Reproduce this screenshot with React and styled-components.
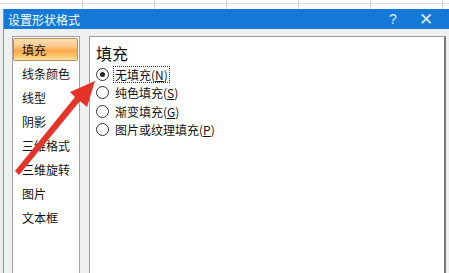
import React from 'react';
import styled, { createGlobalStyle } from 'styled-components';

const GlobalStyle = createGlobalStyle`
  html, body {
    margin: 0;
    padding: 0;
    width: 449px;
    height: 273px;
    overflow: hidden;
    background: #ffffff;
  }
  body {
    font-family: "Noto Sans CJK SC", "Microsoft YaHei", sans-serif;
  }
`;

const Screen = styled.div`
  position: relative;
  width: 449px;
  height: 273px;
  display: flex;
  flex-direction: column;
  overflow: hidden;
`;

const SheetStrip = styled.div`
  height: 9px;
  flex-shrink: 0;
  background-color: #ffffff;
  background-image:
    linear-gradient(to bottom, transparent 3px, #dadada 3px, #dadada 4px, transparent 4px),
    repeating-linear-gradient(to right, transparent 0, transparent 71px, #d4d4d4 71px, #d4d4d4 72px);
  background-position: 0 0, 11px 0;
`;

const Frame = styled.div`
  flex: 1;
  display: flex;
  min-height: 0;
`;

const SheetEdge = styled.div`
  width: 3px;
  flex-shrink: 0;
  background: #e9edf2;
  border-right: 1px solid #5b9bd5;
`;

const Dialog = styled.div`
  flex: 1;
  display: flex;
  flex-direction: column;
  background: #f0f0f0;
  min-width: 0;
`;

const TitleBar = styled.div`
  height: 20px;
  flex-shrink: 0;
  background: #1479d6;
  color: #ffffff;
  display: flex;
  align-items: center;
  padding-left: 4px;
  font-size: 12px;
`;

const Title = styled.span`
  flex: 1;
`;

const TitleButton = styled.span`
  width: ${p => p.$w}px;
  text-align: center;
  font-family: "Liberation Sans", Arial, sans-serif;
  font-size: ${p => p.$size}px;
  font-weight: 300;
  color: #dbe9f7;
`;

const Body = styled.div`
  flex: 1;
  display: flex;
  padding: 7px 3px 0 8px;
  gap: 9px;
  min-height: 0;
`;

const NavList = styled.div`
  width: 65px;
  background: #ffffff;
  border: 1px solid #a0a0a0;
  border-bottom: none;
  padding: 1px 1px 0 0;
  display: flex;
  flex-direction: column;
`;

const NavItem = styled.div`
  height: 23px;
  margin-bottom: 1px;
  display: flex;
  align-items: center;
  padding-left: 9px;
  font-size: 12px;
  color: #111111;
  box-sizing: border-box;
  ${p =>
    p.$active &&
    `
    background: linear-gradient(to bottom, #fde0b4 0%, #fbc98a 35%, #f7a84a 55%, #fcc469 80%, #fde4a4 100%);
    border: 1px solid #b58d5e;
    border-radius: 2px;
    padding-left: 8px;
  `}
`;

const Panel = styled.div`
  flex: 1;
  background: #ffffff;
  border: 1px solid #a0a0a0;
  border-right: 2px solid #7a7a7a;
  border-bottom: none;
  padding: 3px 0 0 6px;
  display: flex;
  flex-direction: column;
`;

const Heading = styled.div`
  font-size: 16px;
  color: #111111;
  height: 25px;
  display: flex;
  align-items: center;
`;

const OptionRow = styled.label`
  display: flex;
  align-items: center;
  height: 18.5px;
  font-size: 12px;
  color: #111111;
  gap: 5px;
`;

const Radio = styled.span`
  width: 11px;
  height: 11px;
  border-radius: 50%;
  border: 1px solid #333333;
  background: #ffffff;
  display: flex;
  align-items: center;
  justify-content: center;
  flex-shrink: 0;
  &::after {
    content: '';
    width: 5px;
    height: 5px;
    border-radius: 50%;
    background: ${p => (p.$checked ? '#222222' : 'transparent')};
  }
`;

const OptionText = styled.span`
  padding: 0 1px;
  outline: ${p => (p.$focus ? '1px dotted #333333' : 'none')};
  line-height: 15px;
`;

const Key = styled.span`
  text-decoration: underline;
`;

const ArrowLayer = styled.svg`
  position: absolute;
  left: 0;
  top: 0;
  pointer-events: none;
`;

const navItems = ['填充', '线条颜色', '线型', '阴影', '三维格式', '三维旋转', '图片', '文本框'];

const options = [
  { label: '无填充', key: 'N', checked: true },
  { label: '纯色填充', key: 'S' },
  { label: '渐变填充', key: 'G' },
  { label: '图片或纹理填充', key: 'P' },
];

export default function App() {
  return (
    <>
      <GlobalStyle />
      <Screen>
        <SheetStrip />
        <Frame>
          <SheetEdge />
          <Dialog>
            <TitleBar>
              <Title>设置形状格式</Title>
              <TitleButton $w={20} $size={14}>?</TitleButton>
              <TitleButton $w={46} $size={17}>✕</TitleButton>
            </TitleBar>
            <Body>
              <NavList>
                {navItems.map((item, i) => (
                  <NavItem key={item} $active={i === 0}>
                    {item}
                  </NavItem>
                ))}
              </NavList>
              <Panel>
                <Heading>填充</Heading>
                {options.map(o => (
                  <OptionRow key={o.key}>
                    <Radio $checked={o.checked} />
                    <OptionText $focus={o.checked}>
                      {o.label}(<Key>{o.key}</Key>)
                    </OptionText>
                  </OptionRow>
                ))}
              </Panel>
            </Body>
          </Dialog>
        </Frame>
        <ArrowLayer width="449" height="273" viewBox="0 0 449 273">
          <polygon
            points="15,171 75,97 70,92 95,81 87,107 80,101 19,175"
            fill="#e5332a"
          />
        </ArrowLayer>
      </Screen>
    </>
  );
}
